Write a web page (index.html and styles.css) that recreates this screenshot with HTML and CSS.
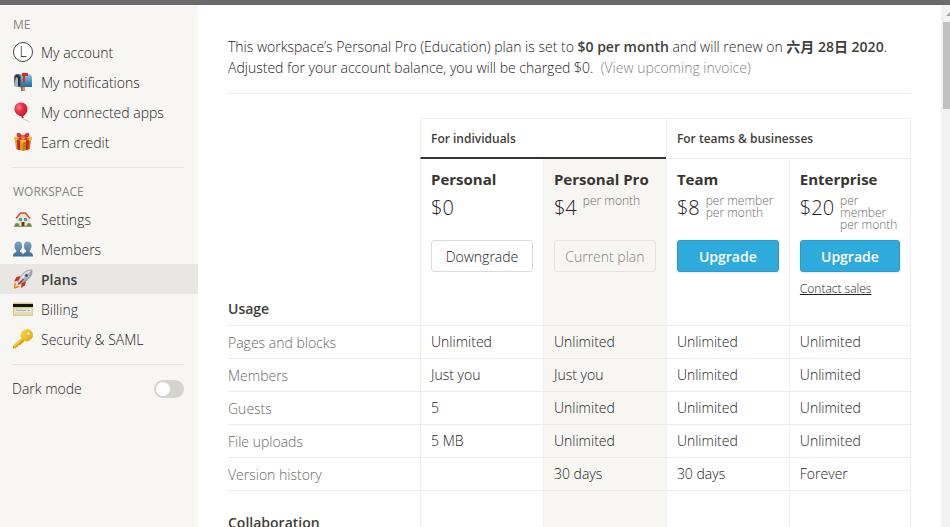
FILE: index.html
```html
<!DOCTYPE html>
<html lang="en">
<head>
  <meta charset="UTF-8">
  <meta name="viewport" content="width=device-width, initial-scale=1.0">
  <title>Plans</title>
  <link rel="stylesheet" href="styles.css">
</head>
<body>
  <div class="topbar"></div>

  <div class="page">
    <!-- Sidebar -->
    <nav class="sidebar">
      <h2 class="group-title">ME</h2>
      <a class="nav-item" href="#account">
        <span class="avatar">L</span>
        My account
      </a>
      <a class="nav-item" href="#notifications">
        <svg class="icon" viewBox="0 0 20 20">
          <defs>
            <linearGradient id="box" x1="0" y1="0" x2="0" y2="1">
              <stop offset="0" stop-color="#8ccbe6"/>
              <stop offset="0.5" stop-color="#4a9cc4"/>
              <stop offset="1" stop-color="#236a92"/>
            </linearGradient>
          </defs>
          <rect x="8" y="13" width="4" height="6" fill="#a9713c"/>
          <rect x="10" y="13" width="2" height="6" fill="#d1a06a"/>
          <path d="M4 2h11c3 0 4 2 4 4v9H8z" fill="url(#box)"/>
          <path d="M1 6c0-3 1-4 3.500-4S8 4 8 6v9.500L1 14z" fill="#50616e"/>
          <path d="M2 6.500C2 4 3 3 4.500 3S7 4.500 7 6.500V14l-5-1z" fill="#263038"/>
          <path d="M1 13l2-8 2 1v9l-4-1z" fill="#a5b5bd"/>
          <path d="M9 1h6v3h-3v7h-2V4H9z" fill="#e5261b"/>
        </svg>
        My notifications
      </a>
      <a class="nav-item" href="#apps">
        <svg class="icon" viewBox="0 0 20 20">
          <defs>
            <radialGradient id="balloon" cx="0.35" cy="0.3" r="0.7">
              <stop offset="0" stop-color="#ff8a93"/>
              <stop offset="0.4" stop-color="#ee3347"/>
              <stop offset="1" stop-color="#c3152c"/>
            </radialGradient>
          </defs>
          <path d="M9.500 15c0 3 2 2 3.500 3s2 1.500 3.500 1.500" fill="none" stroke="#b9b5b2" stroke-width="0.8"/>
          <path d="M8 .5c4 0 6.500 3 6.500 6.500 0 3.500-2.500 6-4.500 7.500l.8 1.500H8.500l.3-1.500C4.500 13.500 1.500 10.500 1.500 7 1.500 3 4.500.5 8 .5z" fill="url(#balloon)"/>
        </svg>
        My connected apps
      </a>
      <a class="nav-item" href="#credit">
        <svg class="icon" viewBox="0 0 20 20">
          <path d="M2 7l8 2v10l-7-2z" fill="#e39a17"/>
          <path d="M18 7l-8 2v10l7-2z" fill="#c47a10"/>
          <path d="M1 5l9-2 9 2v3l-9 2.500L1 8z" fill="#f4bd35"/>
          <path d="M4 7.500l3 1v9.600l-2.500-.6zM16 7.500l-3 1v9.600l2.500-.6z" fill="#c4212a"/>
          <path d="M4 4.500l3-.7 9 3-3 1.500zM16 4.500l-3-.7-9 3 3 1.500z" fill="#d9303a"/>
          <path d="M10 5C8 1 4 0 4 2.500S7 5 10 5c3 0 6 0 6-2.500S12 1 10 5z" fill="#e63a42" stroke="#a9151d" stroke-width="0.6"/>
          <circle cx="10" cy="4.500" r="1.500" fill="#f2686d"/>
        </svg>
        Earn credit
      </a>

      <hr class="divider">

      <h2 class="group-title">WORKSPACE</h2>
      <a class="nav-item" href="#settings">
        <svg class="icon" viewBox="0 0 20 20">
          <path d="M5 8.500L7 5h6l3 3.500V17H5z" fill="#f3e6c4" stroke="#b9a684" stroke-width="0.4"/>
          <path d="M3 9.500l4.500-5.500h5L17 9.500" fill="none" stroke="#d9433a" stroke-width="1.400"/>
          <rect x="6" y="9" width="3" height="3" fill="#3e9ac6"/>
          <rect x="11" y="9" width="3" height="3" fill="#3e9ac6"/>
          <rect x="8.500" y="13" width="3" height="4.500" fill="#65352a"/>
          <path d="M1.500 17c0-2 1-3 2.500-3s2 1 2.500 3zM13.500 17c.5-2 1-3 2.500-3s2.500 1 2.500 3z" fill="#5d9149"/>
          <path d="M1 17h18v1H1z" fill="#a98c6d"/>
        </svg>
        Settings
      </a>
      <a class="nav-item" href="#members">
        <svg class="icon" viewBox="0 0 20 20">
          <defs>
            <linearGradient id="people" x1="0" y1="0" x2="0" y2="1">
              <stop offset="0" stop-color="#7fa5c6"/>
              <stop offset="1" stop-color="#3f6a95"/>
            </linearGradient>
          </defs>
          <path d="M14.500 2.500c2.500 0 4 1.500 4 4.500 0 2-.8 3.500-1.800 4.500v1.500c2 .6 3.300 1.500 3.300 4.500H10c0-3 1-4 3-4.500v-1.500c-1.500-1-2-2.500-2-4.500 0-3 1.200-4.500 3.500-4.500z" fill="url(#people)"/>
          <path d="M5.500 2.500C3 2.500 1.500 4 1.500 7c0 2 .8 3.500 1.800 4.500v1.500C1.300 13.600 0 14.500 0 17.500h10.500c0-3-1.500-4-3.500-4.500v-1.500C8.500 10.500 9 9 9 7c0-3-1.200-4.500-3.500-4.500z" fill="url(#people)"/>
        </svg>
        Members
      </a>
      <a class="nav-item active" href="#plans">
        <svg class="icon" viewBox="0 0 20 20">
          <path d="M2 13.500l4 4c-1 1.500-3 2-5 2 0-2 0-4.500 1-6z" fill="#f5761c"/>
          <path d="M3.200 14.500l2 2c-1 1-1.700 1.300-3 1.400 0-1.200.2-2.500 1-3.400z" fill="#ffdd55"/>
          <path d="M8 7L3.500 8 1 12.500l5-1zM13 12l-1 4.500L8 19l.5-5z" fill="#cf2f2a"/>
          <path d="M19 1c-5 0-8 2-11 6l-3 5.500L7.500 15l5.500-3c4-3 6-6 6-11z" fill="#a6a9b6"/>
          <path d="M19 1c-5 0-8 2-11 6l-3 5.500 1 1z" fill="#dfe0e7"/>
          <path d="M19 1c-5 0-8 2-11 6l-3 5.500L7.500 15l5.500-3c4-3 6-6 6-11z" fill="none" stroke="#70727d" stroke-width="0.6"/>
          <circle cx="13.500" cy="6.500" r="2" fill="#45556b" stroke="#e8e8ee" stroke-width="0.6"/>
          <path d="M10 9.500l1 1-4.500 5-1.500.3.200-1.600z" fill="#c8312b"/>
        </svg>
        Plans
      </a>
      <a class="nav-item" href="#billing">
        <svg class="icon" viewBox="0 0 20 20">
          <rect y="3.500" width="20" height="13.500" rx="1" fill="#d6cb92"/>
          <rect x="1" y="9" width="18" height="7" fill="#e4dbae"/>
          <rect y="5" width="20" height="3" fill="#15130f"/>
          <rect x="2" y="10" width="16" height="3" fill="#e9e8e0"/>
          <path d="M3 11.500l2-.6 1 1 2-1 2 .9 2-.8 1 .7M14.500 11.500h2.500" fill="none" stroke="#6382a8" stroke-width="0.6"/>
        </svg>
        Billing
      </a>
      <a class="nav-item" href="#security">
        <svg class="icon" viewBox="0 0 20 20">
          <defs>
            <linearGradient id="key" x1="0" y1="0" x2="1" y2="1">
              <stop offset="0" stop-color="#ffdf3d"/>
              <stop offset="1" stop-color="#dfa20a"/>
            </linearGradient>
          </defs>
          <path d="M9 9.500l2.500 2.500-5 4.500-1.500-.3-.3 1.800-1.700.2-.5 1.300H0v-2.500z" fill="#d19a12"/>
          <path d="M9 8.500l1.500 1.500L1.500 18.500 0 17z" fill="#f4c822"/>
          <path d="M11 1.500C13 0 16 0 18 2s2.500 5 1 7c-1.500 2.500-4.500 3.500-7 3L8 8c-.5-2.500.7-5 3-6.500zM15.500 3a1.500 1.500 0 1 0 0 3 1.500 1.500 0 0 0 0-3z" fill="url(#key)" fill-rule="evenodd" stroke="#d8a414" stroke-width="0.4"/>
        </svg>
        Security &amp; SAML
      </a>

      <hr class="divider">

      <div class="switch-row">
        <label for="darkMode">Dark mode</label>
        <input type="checkbox" class="switch" id="darkMode">
      </div>
    </nav>

    <!-- Plans -->
    <main class="content">
      <p class="summary">
        This workspace’s Personal Pro (Education) plan is set to <b>$0 per month</b> and will renew on <b>六月 28日 2020</b>.<br>
        Adjusted for your account balance, you will be charged $0. &nbsp;<a class="invoice" href="#invoice">(View upcoming invoice)</a>
      </p>

      <table class="plans">
        <colgroup>
          <col class="label-col">
          <col class="plan-col">
          <col class="plan-col">
          <col class="plan-col">
          <col>
        </colgroup>
        <thead>
          <tr class="audience">
            <td></td>
            <th colspan="2" class="selected">For individuals</th>
            <th colspan="2">For teams &amp; businesses</th>
          </tr>
          <tr class="offers">
            <th class="section">Usage</th>
            <td>
              <h3>Personal</h3>
              <div class="price"><span class="amount">$0</span></div>
              <button class="btn">Downgrade</button>
            </td>
            <td class="current">
              <h3>Personal Pro</h3>
              <div class="price"><span class="amount">$4</span><span class="per">per month</span></div>
              <button class="btn" disabled>Current plan</button>
            </td>
            <td>
              <h3>Team</h3>
              <div class="price"><span class="amount">$8</span><span class="per">per member<br>per month</span></div>
              <button class="btn primary">Upgrade</button>
            </td>
            <td>
              <h3>Enterprise</h3>
              <div class="price"><span class="amount">$20</span><span class="per">per<br>member<br>per month</span></div>
              <button class="btn primary">Upgrade</button>
              <a class="contact" href="#sales">Contact sales</a>
            </td>
          </tr>
        </thead>
        <tbody>
          <tr><th>Pages and blocks</th><td>Unlimited</td><td class="current">Unlimited</td><td>Unlimited</td><td>Unlimited</td></tr>
          <tr><th>Members</th><td>Just you</td><td class="current">Just you</td><td>Unlimited</td><td>Unlimited</td></tr>
          <tr><th>Guests</th><td>5</td><td class="current">Unlimited</td><td>Unlimited</td><td>Unlimited</td></tr>
          <tr><th>File uploads</th><td>5 MB</td><td class="current">Unlimited</td><td>Unlimited</td><td>Unlimited</td></tr>
          <tr><th>Version history</th><td></td><td class="current">30 days</td><td>30 days</td><td>Forever</td></tr>
          <tr class="section-row"><th class="section">Collaboration</th><td></td><td class="current"></td><td></td><td></td></tr>
        </tbody>
      </table>
    </main>

    <div class="scrollbar">
      <svg class="arrow" viewBox="0 0 7 17"><path d="M3 11l4-4v4z" fill="#a3a3a3"/></svg>
      <div class="thumb"></div>
    </div>
  </div>
</body>
</html>
```

FILE: styles.css
```css
* {
  box-sizing: border-box;
}
body {
  margin: 0;
  height: 100vh;
  display: flex;
  flex-direction: column;
  overflow: hidden;
  font-family: "Open Sans", "Noto Sans CJK TC", sans-serif;
  font-size: 14px;
  font-weight: 300;
  color: #24221d;
  background: white;
}
.topbar {
  flex: none;
  height: 5px;
  background: #6b6969;
}
.page {
  flex: 1;
  min-height: 0;
  display: flex;
}

/* Sidebar */
.sidebar {
  flex: none;
  width: 198px;
  padding-top: 9px;
  background: #f7f6f3;
}
.group-title {
  margin: 0;
  padding: 0 0 2px 13px;
  font-size: 12px;
  font-weight: 400;
  line-height: 21px;
  color: #86847f;
}
.nav-item {
  display: flex;
  align-items: center;
  gap: 8px;
  height: 30px;
  padding-left: 13px;
  color: inherit;
  text-decoration: none;
}
.nav-item.active {
  background: #e8e7e4;
  font-weight: 600;
  color: #403e39;
}
.icon {
  width: 20px;
  height: 20px;
}
.avatar {
  width: 20px;
  height: 20px;
  border: 1px solid #454440;
  border-radius: 50%;
  background: white;
  line-height: 18px;
  text-align: center;
}
.divider {
  margin: 10px 14px 13px 12px;
  border: none;
  border-top: 1px solid #e4e3e0;
}
.switch-row {
  display: flex;
  align-items: center;
  justify-content: space-between;
  padding: 1px 14px 0 12px;
}
.switch {
  appearance: none;
  width: 30px;
  height: 18px;
  margin: 0;
  padding: 2px;
  border-radius: 9px;
  background: #d4d3d0;
}
.switch::before {
  content: "";
  display: block;
  width: 14px;
  height: 14px;
  border-radius: 50%;
  background: white;
}
.switch:checked {
  padding-left: 14px;
  background: #2eaadc;
}

/* Content */
.content {
  flex: 1;
  min-width: 0;
  padding: 31px 30px 0;
  overflow: hidden;
}
.summary {
  margin: 0 0 24px;
  padding-bottom: 15px;
  border-bottom: 1px solid #ebebea;
  line-height: 21px;
}
.summary b {
  font-weight: 600;
  color: #403e39;
}
.invoice {
  color: #858480;
  text-decoration: none;
}

/* Plans table */
.plans {
  width: 100%;
  table-layout: fixed;
  border-collapse: separate;
  border-spacing: 0;
}
.label-col {
  width: 192px;
}
.plan-col {
  width: 18%;
}
.plans th,
.plans td {
  height: 33px;
  padding: 0 10px;
  border-bottom: 1px solid #ebebea;
  text-align: left;
}
.plans td {
  padding-bottom: 2px;
}
.plans th:first-child {
  padding-left: 0;
  font-weight: 300;
  color: #6b6965;
}
.plans td + td,
.plans th + td,
.plans td + th,
.plans th + th {
  border-left: 1px solid #efefee;
}
.plans td:last-child,
.plans th:last-child {
  border-right: 1px solid #efefee;
}
.plans .current {
  background: #f7f6f3;
}
.plans .audience td {
  border: none;
}
.plans .audience th {
  height: 41px;
  border-top: 1px solid #efefee;
  font-size: 12px;
  font-weight: 600;
  color: #403e39;
}
.plans .audience .selected {
  border-bottom: 2px solid #37352f;
}
.plans .offers td {
  height: 167px;
  padding-top: 9px;
  vertical-align: top;
}
.plans .section:first-child {
  padding-bottom: 7px;
  vertical-align: bottom;
  font-weight: 600;
  color: #403e39;
}
.plans .section-row th {
  height: 49px;
}
.plans h3 {
  margin: 0;
  font-size: 15px;
  font-weight: 700;
  line-height: 22px;
  color: #37352f;
  white-space: nowrap;
}
.price {
  display: flex;
  gap: 6px;
  height: 50px;
}
.amount {
  font-size: 20px;
  line-height: 36px;
}
.per {
  padding-top: 5px;
  font-size: 12px;
  line-height: 12px;
  color: #6b6965;
}
.btn {
  display: block;
  width: 100%;
  height: 32px;
  padding: 0;
  border: 1px solid #dcdbd9;
  border-radius: 3px;
  background: none;
  font-family: inherit;
  font-size: 14px;
  font-weight: 300;
  color: inherit;
  cursor: pointer;
}
.btn:disabled {
  border-color: #e4e3e0;
  color: #858480;
  cursor: default;
}
.btn.primary {
  border-color: #2a9bc9;
  background: #2eaadc;
  box-shadow: 0 1px 2px rgba(15, 15, 15, 0.1);
  font-weight: 600;
  color: white;
}
.contact {
  display: block;
  margin-top: 8px;
  font-size: 12px;
  line-height: 18px;
  color: inherit;
}

/* Scrollbar */
.scrollbar {
  flex: none;
  width: 9px;
  padding-left: 2px;
  background: #f1f1f1;
}
.arrow {
  display: block;
  width: 7px;
  height: 17px;
}
.thumb {
  height: 87px;
  background: #c1c1c1;
}
```
